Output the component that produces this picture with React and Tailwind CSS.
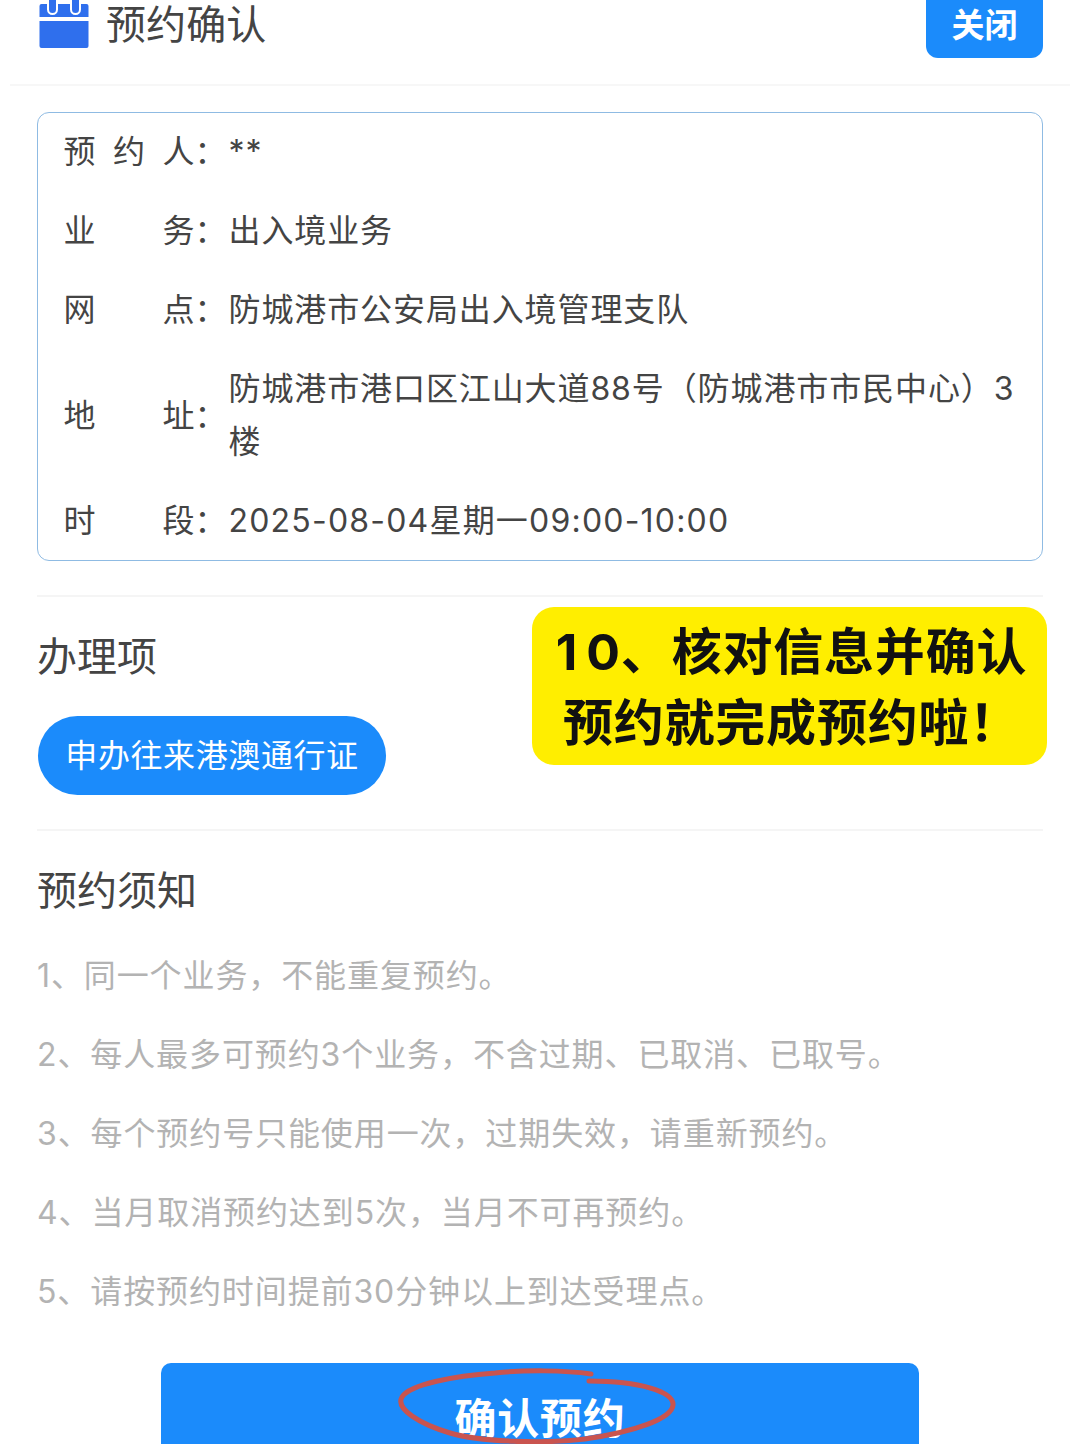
const font = { fontFamily: '"Inter", "Noto Sans CJK SC", sans-serif' };

const rows = [
  { label: '预约人', value: '**' },
  { label: '业务', value: '出入境业务' },
  { label: '网点', value: '防城港市公安局出入境管理支队' },
  { label: '地址', value: '防城港市港口区江山大道88号（防城港市市民中心）3楼' },
  { label: '时段', value: '2025-08-04星期一09:00-10:00', wide: true },
];

const notes = [
  '1、同一个业务，不能重复预约。',
  '2、每人最多可预约3个业务，不含过期、已取消、已取号。',
  '3、每个预约号只能使用一次，过期失效，请重新预约。',
  '4、当月取消预约达到5次，当月不可再预约。',
  '5、请按预约时间提前30分钟以上到达受理点。',
];

function CalendarIcon() {
  return (
    <svg width="50" height="50" viewBox="0 0 50 50" className="shrink-0">
      <path d="M0.5 6a2 2 0 0 1 2-2h45a2 2 0 0 1 2 2v11H0.5z" fill="#2f6fed" />
      <path d="M0.5 21h49v25a2 2 0 0 1-2 2h-45a2 2 0 0 1-2-2z" fill="#2f6fed" />
      <rect x="9" y="-4" width="9" height="18" rx="4.5" fill="#2f6fed" stroke="#fff" strokeWidth="2" />
      <rect x="32" y="-4" width="9" height="18" rx="4.5" fill="#2f6fed" stroke="#fff" strokeWidth="2" />
    </svg>
  );
}

function Row({ label, value, wide }) {
  return (
    <div className="flex items-center pt-[12px] pb-[14px] text-[32px] leading-[53px] text-[#444]">
      <div className="w-[131px] shrink-0 flex justify-between">
        {label.split('').map((c) => <span key={c}>{c}</span>)}
      </div>
      <span className="w-[34px] shrink-0">：</span>
      <div className={wide ? 'flex-1 tracking-[1.2px]' : 'flex-1 tracking-[0.9px]'}>{value}</div>
    </div>
  );
}

export default function App() {
  return (
    <div className="relative w-[1080px] h-[1444px] overflow-hidden bg-white" style={font}>
      <div className="mx-[10px] h-[86px] border-b-2 border-[#f7f7f7] pl-[29px] pr-[27px] flex justify-between">
        <div className="flex items-start gap-[17px]">
          <div className="h-[48px] overflow-hidden"><CalendarIcon /></div>
          <span className="text-[40px] leading-[50px] text-[#444] tracking-[0.1px]">预约确认</span>
        </div>
        <button className="w-[117px] h-[58px] rounded-b-[12px] bg-[#1b8bfb] text-white text-[33px] font-bold leading-[46px] pb-[8px]">关闭</button>
      </div>

      <div className="mx-[37px] mt-[26px] h-[449px] rounded-[12px] border-[1.5px] border-[#8fbbe3] pl-[25.5px] pr-[19px]">
        {rows.map((r) => <Row key={r.label} {...r} />)}
      </div>

      <div className="mx-[37px] mt-[34px] h-[236px] border-y-2 border-[#f5f5f5]">
        <h2 className="pt-[36px] text-[40px] leading-[48px] font-normal text-[#444]">办理项</h2>
        <div className="mt-[35px] ml-[1px] w-[348px] h-[79px] rounded-full bg-[#1b8bfb] text-white text-[32px] leading-[79px] text-center tracking-[0.6px]">申办往来港澳通行证</div>
      </div>

      <div className="mx-[37px]">
        <h2 className="pt-[36px] text-[40px] leading-[48px] text-[#444]">预约须知</h2>
        <div className="mt-[21px] text-[32px] leading-[79px] text-[#b3b3b3] tracking-[0.9px]">
          {notes.map((n) => <p key={n}>{n}</p>)}
        </div>
      </div>

      <div className="mx-auto mt-[32px] w-[758px] h-[90px] rounded-t-[10px] bg-[#1b8bfb] text-white text-[42px] font-bold text-center pt-[30px] leading-[52px] tracking-[0.7px]">确认预约</div>

      {/* callout pasted over the page */}
      <div className="absolute left-[532px] top-[607px] w-[515px] h-[158px] rounded-[22px] bg-[#ffee00] text-[#111] text-[50px] font-bold leading-[71px] text-center pt-[10px] pl-[4px]">
        <div className="tracking-[0.8px]"><span className="tracking-[9px]">1</span>0、核对信息并确认</div>
        <div className="tracking-[0.8px]">预约就完成预约啦！</div>
      </div>

      {/* red marker circle */}
      <svg className="absolute left-[395px] top-[1364px]" width="290" height="80" viewBox="0 0 290 80" fill="none">
        <path d="M196 10C170 6 128 6 100 9C60 12 15 20 7 33C0 45 25 60 55 69C85 78 150 80 190 75C238 68 277 55 278 41C279 28 245 17 194 17" stroke="#c9544f" strokeWidth="5" strokeLinecap="round" />
      </svg>
    </div>
  );
}
